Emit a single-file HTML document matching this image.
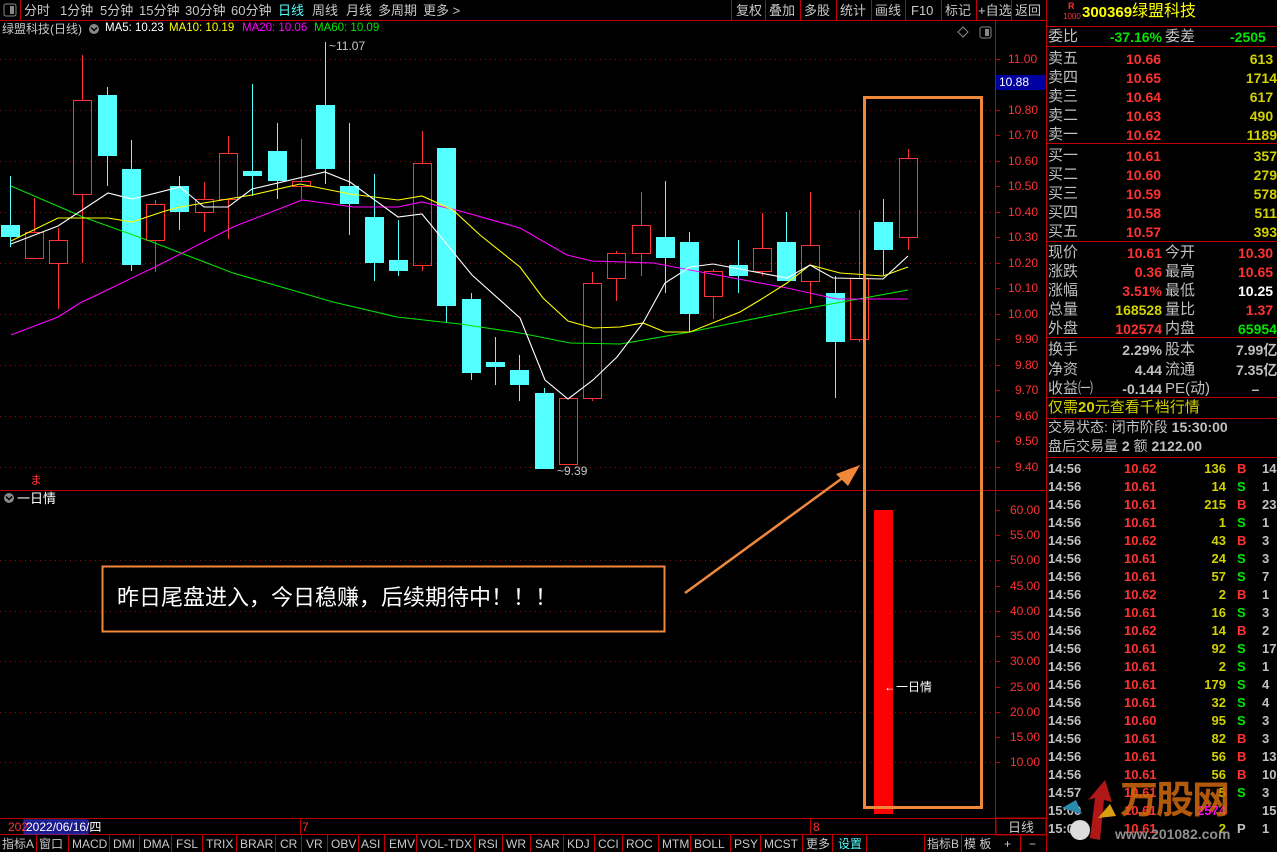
<!DOCTYPE html>
<html><head><meta charset="utf-8"><style>
*{margin:0;padding:0;box-sizing:border-box}
body{width:1277px;height:852px;background:#000;overflow:hidden;position:relative;font-family:"Liberation Sans","WenQuanYi Zen Hei","Noto Sans CJK SC",sans-serif;color:#c8c8c8}
.a{position:absolute;white-space:nowrap;line-height:1}
.t{font-size:13px}
.r{color:#ff3232}.y{color:#ffff00}.g{color:#00e600}.c{color:#54ffff}.w{color:#fff}.o{color:#d2d200}.m{color:#ff00ff}.gr{color:#c0c0c0}
.rp{font-size:14px;font-weight:bold}
</style></head><body>
<svg width="1277" height="852" style="position:absolute;left:0;top:0">
<line x1="0" y1="20.5" x2="1046" y2="20.5" stroke="#c00000"/>
<line x1="20.5" y1="0" x2="20.5" y2="20" stroke="#c00000"/>
<g stroke="#c00000"><line x1="731.5" y1="0" x2="731.5" y2="20"/><line x1="765.5" y1="0" x2="765.5" y2="20"/><line x1="800.5" y1="0" x2="800.5" y2="20"/><line x1="836.5" y1="0" x2="836.5" y2="20"/><line x1="871.5" y1="0" x2="871.5" y2="20"/><line x1="905.5" y1="0" x2="905.5" y2="20"/><line x1="941.5" y1="0" x2="941.5" y2="20"/><line x1="976.5" y1="0" x2="976.5" y2="20"/><line x1="1011.5" y1="0" x2="1011.5" y2="20"/></g>
<rect x="4" y="4" width="12" height="12" fill="none" stroke="#888" rx="2"/><rect x="10" y="6" width="4" height="8" fill="#888"/>
<line x1="995.5" y1="20" x2="995.5" y2="835" stroke="#c00000"/>
<line x1="1046.5" y1="0" x2="1046.5" y2="852" stroke="#c00000"/>
<line x1="0" y1="490.5" x2="1046" y2="490.5" stroke="#c00000"/>
<line x1="0" y1="818.5" x2="1046" y2="818.5" stroke="#c00000"/>
<line x1="0" y1="834.5" x2="1046" y2="834.5" stroke="#c00000"/>
<g stroke="#8a1010" stroke-dasharray="1,4">
<line x1="0" y1="59.5" x2="995" y2="59.5"/><line x1="0" y1="110.5" x2="995" y2="110.5"/><line x1="0" y1="161.5" x2="995" y2="161.5"/><line x1="0" y1="212.5" x2="995" y2="212.5"/><line x1="0" y1="263.5" x2="995" y2="263.5"/><line x1="0" y1="314.5" x2="995" y2="314.5"/><line x1="0" y1="365.5" x2="995" y2="365.5"/><line x1="0" y1="416.5" x2="995" y2="416.5"/><line x1="0" y1="467.5" x2="995" y2="467.5"/>
<line x1="0" y1="560.5" x2="995" y2="560.5"/><line x1="0" y1="611.5" x2="995" y2="611.5"/><line x1="0" y1="661.5" x2="995" y2="661.5"/><line x1="0" y1="712.5" x2="995" y2="712.5"/><line x1="0" y1="762.5" x2="995" y2="762.5"/>
</g>
<g stroke="#c00000">
<line x1="996" y1="59.5" x2="1000" y2="59.5"/><line x1="996" y1="84.5" x2="1000" y2="84.5"/><line x1="996" y1="110.5" x2="1000" y2="110.5"/><line x1="996" y1="135.5" x2="1000" y2="135.5"/><line x1="996" y1="161.5" x2="1000" y2="161.5"/><line x1="996" y1="186.5" x2="1000" y2="186.5"/><line x1="996" y1="212.5" x2="1000" y2="212.5"/><line x1="996" y1="237.5" x2="1000" y2="237.5"/><line x1="996" y1="263.5" x2="1000" y2="263.5"/><line x1="996" y1="288.5" x2="1000" y2="288.5"/><line x1="996" y1="314.5" x2="1000" y2="314.5"/><line x1="996" y1="339.5" x2="1000" y2="339.5"/><line x1="996" y1="365.5" x2="1000" y2="365.5"/><line x1="996" y1="390.5" x2="1000" y2="390.5"/><line x1="996" y1="416.5" x2="1000" y2="416.5"/><line x1="996" y1="441.5" x2="1000" y2="441.5"/><line x1="996" y1="467.5" x2="1000" y2="467.5"/>
</g>
<g stroke="#54ffff" stroke-width="1">
<line x1="10.5" y1="176" x2="10.5" y2="247"/><line x1="107.5" y1="87" x2="107.5" y2="186"/><line x1="131.5" y1="140" x2="131.5" y2="271"/><line x1="179.5" y1="176" x2="179.5" y2="230"/><line x1="252.5" y1="84" x2="252.5" y2="196"/><line x1="277.5" y1="123" x2="277.5" y2="199"/><line x1="325.5" y1="42" x2="325.5" y2="184"/><line x1="349.5" y1="123" x2="349.5" y2="235"/><line x1="374.5" y1="174" x2="374.5" y2="281"/><line x1="398.5" y1="220" x2="398.5" y2="276"/><line x1="446.5" y1="148" x2="446.5" y2="323"/><line x1="471.5" y1="293" x2="471.5" y2="380"/><line x1="495.5" y1="337" x2="495.5" y2="385"/><line x1="519.5" y1="355" x2="519.5" y2="401"/><line x1="544.5" y1="388" x2="544.5" y2="469"/><line x1="665.5" y1="181" x2="665.5" y2="293"/><line x1="689.5" y1="232" x2="689.5" y2="332"/><line x1="738.5" y1="240" x2="738.5" y2="293"/><line x1="786.5" y1="212" x2="786.5" y2="281"/><line x1="835.5" y1="276" x2="835.5" y2="398"/><line x1="883.5" y1="199" x2="883.5" y2="275"/>
</g>
<g fill="#54ffff">
<rect x="1" y="225" width="19" height="12"/><rect x="98" y="95" width="19" height="61"/><rect x="122" y="169" width="19" height="96"/><rect x="170" y="186" width="19" height="26"/><rect x="243" y="171" width="19" height="5"/><rect x="268" y="151" width="19" height="30"/><rect x="316" y="105" width="19" height="64"/><rect x="340" y="186" width="19" height="18"/><rect x="365" y="217" width="19" height="46"/><rect x="389" y="260" width="19" height="11"/><rect x="437" y="148" width="19" height="158"/><rect x="462" y="299" width="19" height="74"/><rect x="486" y="362" width="19" height="5"/><rect x="510" y="370" width="19" height="15"/><rect x="535" y="393" width="19" height="76"/><rect x="656" y="237" width="19" height="21"/><rect x="680" y="242" width="19" height="72"/><rect x="729" y="265" width="19" height="11"/><rect x="777" y="242" width="19" height="39"/><rect x="826" y="293" width="19" height="49"/><rect x="874" y="222" width="19" height="28"/>
</g>
<g stroke="#ff3232" fill="none">
<path d="M34.5 198V232M58.5 228V240M58.5 263V309M82.5 55V100M82.5 194V263M155.5 200V204M155.5 240V272M204.5 182V199M204.5 212V232M228.5 136V153M228.5 199V239M301.5 139V181M301.5 186V199M422.5 131V163M422.5 265V271M592.5 272V283M592.5 398V401M616.5 251V253M616.5 278V301M641.5 192V225M641.5 253V276M713.5 269V271M713.5 296V319M762.5 213V248M762.5 271V276M810.5 192V245M810.5 281V304M859.5 210V278M859.5 339V342M908.5 149V158M908.5 237V250"/>
<rect x="25.5" y="232.5" width="18" height="26"/><rect x="49.5" y="240.5" width="18" height="23"/><rect x="73.5" y="100.5" width="18" height="94"/><rect x="146.5" y="204.5" width="18" height="36"/><rect x="195.5" y="199.5" width="18" height="13"/><rect x="219.5" y="153.5" width="18" height="46"/><rect x="292.5" y="181.5" width="18" height="5"/><rect x="413.5" y="163.5" width="18" height="102"/><rect x="559.5" y="398.5" width="18" height="66"/><rect x="583.5" y="283.5" width="18" height="115"/><rect x="607.5" y="253.5" width="18" height="25"/><rect x="632.5" y="225.5" width="18" height="28"/><rect x="704.5" y="271.5" width="18" height="25"/><rect x="753.5" y="248.5" width="18" height="23"/><rect x="801.5" y="245.5" width="18" height="36"/><rect x="850.5" y="278.5" width="18" height="61"/><rect x="899.5" y="158.5" width="18" height="79"/>
</g>
<g fill="none" stroke-width="1.1">
<polyline stroke="#00e600" points="11,186 83,217 147,240 233,273 333,302 397,317 460,324 520,333 570,343 620,344 690,332 787,312 853,300 908,290"/>
<polyline stroke="#ff00ff" points="11,335 58,317 80,303 155,267 233,227 302,200 353,207 398,207 422,202 460,211 520,228 567,255 592,261 653,263 690,270 787,288 837,299 908,299"/>
<polyline stroke="#ffff00" points="11,241 58,218 108,218 132,222 165,211 180,207 252,195 300,184 350,194 398,200 422,196 453,210 480,235 520,267 543,298 568,321 593,328 620,327 643,323 665,332 690,332 740,312 760,300 787,283 810,265 840,273 883,276 908,267"/>
<polyline stroke="#ffffff" points="11,244 58,226 108,193 132,199 180,187 204,207 228,207 252,189 325,172 350,182 398,217 422,214 472,275 520,318 545,380 568,399 593,380 617,357 643,323 665,283 690,267 713,264 787,278 810,265 833,278 883,279 908,256"/>
</g>
<rect x="996" y="75" width="50" height="15" fill="#0000a0"/>
<rect x="874" y="510" width="19" height="304" fill="#ff0000"/>
<g stroke="#c00000"><line x1="996" y1="510.5" x2="1000" y2="510.5"/><line x1="996" y1="535.5" x2="1000" y2="535.5"/><line x1="996" y1="560.5" x2="1000" y2="560.5"/><line x1="996" y1="586.5" x2="1000" y2="586.5"/><line x1="996" y1="611.5" x2="1000" y2="611.5"/><line x1="996" y1="636.5" x2="1000" y2="636.5"/><line x1="996" y1="661.5" x2="1000" y2="661.5"/><line x1="996" y1="687.5" x2="1000" y2="687.5"/><line x1="996" y1="712.5" x2="1000" y2="712.5"/><line x1="996" y1="737.5" x2="1000" y2="737.5"/><line x1="996" y1="762.5" x2="1000" y2="762.5"/></g>
<rect x="864.5" y="97.5" width="117" height="710" fill="none" stroke="#f0883c" stroke-width="3"/>
<rect x="102.5" y="566.5" width="562" height="65" fill="none" stroke="#f0883c" stroke-width="2"/>
<line x1="685" y1="593" x2="848" y2="474" stroke="#f0883c" stroke-width="2.5"/>
<polygon points="860,465 836,474 848,486" fill="#f0883c"/>
<rect x="24" y="820" width="64" height="14" fill="#1a1a8c" stroke="#3030c0"/>
<line x1="300.5" y1="818" x2="300.5" y2="834" stroke="#c00000"/>
<line x1="810.5" y1="818" x2="810.5" y2="834" stroke="#c00000"/>
<rect x="996" y="818" width="50" height="17" fill="none" stroke="#c00000"/>
<g stroke="#c00000">
<line x1="36.5" y1="835" x2="36.5" y2="852"/><line x1="68.5" y1="835" x2="68.5" y2="852"/><line x1="109.5" y1="835" x2="109.5" y2="852"/><line x1="139.5" y1="835" x2="139.5" y2="852"/><line x1="171.5" y1="835" x2="171.5" y2="852"/><line x1="202.5" y1="835" x2="202.5" y2="852"/><line x1="236.5" y1="835" x2="236.5" y2="852"/><line x1="275.5" y1="835" x2="275.5" y2="852"/><line x1="301.5" y1="835" x2="301.5" y2="852"/><line x1="327.5" y1="835" x2="327.5" y2="852"/><line x1="358.5" y1="835" x2="358.5" y2="852"/><line x1="384.5" y1="835" x2="384.5" y2="852"/><line x1="416.5" y1="835" x2="416.5" y2="852"/><line x1="474.5" y1="835" x2="474.5" y2="852"/><line x1="502.5" y1="835" x2="502.5" y2="852"/><line x1="530.5" y1="835" x2="530.5" y2="852"/><line x1="563.5" y1="835" x2="563.5" y2="852"/><line x1="594.5" y1="835" x2="594.5" y2="852"/><line x1="622.5" y1="835" x2="622.5" y2="852"/><line x1="658.5" y1="835" x2="658.5" y2="852"/><line x1="690.5" y1="835" x2="690.5" y2="852"/><line x1="730.5" y1="835" x2="730.5" y2="852"/><line x1="760.5" y1="835" x2="760.5" y2="852"/><line x1="802.5" y1="835" x2="802.5" y2="852"/><line x1="832.5" y1="835" x2="832.5" y2="852"/><line x1="866.5" y1="835" x2="866.5" y2="852"/><line x1="924.5" y1="835" x2="924.5" y2="852"/><line x1="961.5" y1="835" x2="961.5" y2="852"/><line x1="1020.5" y1="835" x2="1020.5" y2="852"/>
</g>
<g stroke="#c00000">
<line x1="1046" y1="26.5" x2="1277" y2="26.5"/><line x1="1046" y1="46.5" x2="1277" y2="46.5"/><line x1="1046" y1="143.5" x2="1277" y2="143.5"/><line x1="1046" y1="241.5" x2="1277" y2="241.5"/><line x1="1046" y1="337.5" x2="1277" y2="337.5"/><line x1="1046" y1="397.5" x2="1277" y2="397.5"/><line x1="1046" y1="418.5" x2="1277" y2="418.5"/><line x1="1046" y1="457.5" x2="1277" y2="457.5"/>
</g>
<path d="M963 27l5 5-5 5-5-5z" fill="none" stroke="#888"/>
<rect x="980" y="27" width="11" height="11" fill="none" stroke="#888" rx="2"/><rect x="985" y="29" width="4" height="7" fill="#888"/>
<circle cx="9" cy="498" r="5" fill="#888"/><path d="M6 496.5l3 3 3-3" stroke="#000" fill="none" stroke-width="1.5"/>
<circle cx="94" cy="29" r="5" fill="#888"/><path d="M91 27.5l3 3 3-3" stroke="#000" fill="none" stroke-width="1.5"/>
</svg>

<div class="a t" style="left:24px;top:4px">分时</div>
<div class="a t" style="left:60px;top:4px">1分钟</div>
<div class="a t" style="left:100px;top:4px">5分钟</div>
<div class="a t" style="left:139px;top:4px">15分钟</div>
<div class="a t" style="left:185px;top:4px">30分钟</div>
<div class="a t" style="left:231px;top:4px">60分钟</div>
<div class="a t c" style="left:278px;top:4px">日线</div>
<div class="a t" style="left:312px;top:4px">周线</div>
<div class="a t" style="left:346px;top:4px">月线</div>
<div class="a t" style="left:378px;top:4px">多周期</div>
<div class="a t" style="left:423px;top:4px">更多 &gt;</div>
<div class="a t" style="left:736px;top:4px">复权</div>
<div class="a t" style="left:769px;top:4px">叠加</div>
<div class="a t" style="left:804px;top:4px">多股</div>
<div class="a t" style="left:840px;top:4px">统计</div>
<div class="a t" style="left:875px;top:4px">画线</div>
<div class="a t" style="left:911px;top:4px">F10</div>
<div class="a t" style="left:945px;top:4px">标记</div>
<div class="a t" style="left:978px;top:4px">+自选</div>
<div class="a t" style="left:1015px;top:4px">返回</div>

<div class="a" style="left:2px;top:23px;font-size:12px">绿盟科技(日线)</div>
<div class="a w" style="left:105px;top:23px;font-size:11.5px">MA5: 10.23</div>
<div class="a y" style="left:169px;top:23px;font-size:11.5px">MA10: 10.19</div>
<div class="a m" style="left:242px;top:23px;font-size:11.5px">MA20: 10.06</div>
<div class="a g" style="left:314px;top:23px;font-size:11.5px">MA60: 10.09</div>
<div class="a" style="left:329px;top:40px;font-size:12px">~11.07</div>
<div class="a" style="left:557px;top:465px;font-size:12px">~9.39</div>

<div class="a r" style="font-size:12px;left:1008px;top:53px">11.00</div>
<div class="a r" style="font-size:12px;left:1008px;top:104px">10.80</div>
<div class="a r" style="font-size:12px;left:1008px;top:129px">10.70</div>
<div class="a r" style="font-size:12px;left:1008px;top:155px">10.60</div>
<div class="a r" style="font-size:12px;left:1008px;top:180px">10.50</div>
<div class="a r" style="font-size:12px;left:1008px;top:206px">10.40</div>
<div class="a r" style="font-size:12px;left:1008px;top:231px">10.30</div>
<div class="a r" style="font-size:12px;left:1008px;top:257px">10.20</div>
<div class="a r" style="font-size:12px;left:1008px;top:282px">10.10</div>
<div class="a r" style="font-size:12px;left:1008px;top:308px">10.00</div>
<div class="a r" style="font-size:12px;left:1015px;top:333px">9.90</div>
<div class="a r" style="font-size:12px;left:1015px;top:359px">9.80</div>
<div class="a r" style="font-size:12px;left:1015px;top:384px">9.70</div>
<div class="a r" style="font-size:12px;left:1015px;top:410px">9.60</div>
<div class="a r" style="font-size:12px;left:1015px;top:435px">9.50</div>
<div class="a r" style="font-size:12px;left:1015px;top:461px">9.40</div>
<div class="a w" style="font-size:12px;left:999px;top:76px">10.88</div>

<div class="a r" style="font-size:12px;left:1010px;top:504px">60.00</div>
<div class="a r" style="font-size:12px;left:1010px;top:529px">55.00</div>
<div class="a r" style="font-size:12px;left:1010px;top:554px">50.00</div>
<div class="a r" style="font-size:12px;left:1010px;top:580px">45.00</div>
<div class="a r" style="font-size:12px;left:1010px;top:605px">40.00</div>
<div class="a r" style="font-size:12px;left:1010px;top:630px">35.00</div>
<div class="a r" style="font-size:12px;left:1010px;top:655px">30.00</div>
<div class="a r" style="font-size:12px;left:1010px;top:681px">25.00</div>
<div class="a r" style="font-size:12px;left:1010px;top:706px">20.00</div>
<div class="a r" style="font-size:12px;left:1010px;top:731px">15.00</div>
<div class="a r" style="font-size:12px;left:1010px;top:756px">10.00</div>

<div class="a r" style="font-size:12px;left:30px;top:474px">ま</div>
<div class="a t w" style="left:17px;top:492px">一日情</div>
<div class="a t w" style="left:884px;top:681px;font-size:12px">←一日情</div>
<div class="a w" style="left:117px;top:587px;font-size:22px">昨日尾盘进入，今日稳赚，后续期待中！！！</div>

<div class="a r" style="left:8px;top:821px;font-size:12px">202</div>
<div class="a w" style="left:26px;top:821px;font-size:12px">2022/06/16/四</div>
<div class="a r" style="left:302px;top:821px;font-size:12px">7</div>
<div class="a r" style="left:813px;top:821px;font-size:12px">8</div>
<div class="a t" style="left:1008px;top:821px">日线</div>

<div class="a" style="top:838px;font-size:12px;left:0">
<span class="a" style="left:2px">指标A</span><span class="a" style="left:39px">窗口</span><span class="a" style="left:72px">MACD</span><span class="a" style="left:113px">DMI</span><span class="a" style="left:143px">DMA</span><span class="a" style="left:176px">FSL</span><span class="a" style="left:206px">TRIX</span><span class="a" style="left:240px">BRAR</span><span class="a" style="left:280px">CR</span><span class="a" style="left:306px">VR</span><span class="a" style="left:331px">OBV</span><span class="a" style="left:361px">ASI</span><span class="a" style="left:389px">EMV</span><span class="a" style="left:420px">VOL-TDX</span><span class="a" style="left:478px">RSI</span><span class="a" style="left:506px">WR</span><span class="a" style="left:535px">SAR</span><span class="a" style="left:567px">KDJ</span><span class="a" style="left:598px">CCI</span><span class="a" style="left:626px">ROC</span><span class="a" style="left:662px">MTM</span><span class="a" style="left:694px">BOLL</span><span class="a" style="left:734px">PSY</span><span class="a" style="left:764px">MCST</span><span class="a" style="left:806px">更多</span><span class="a c" style="left:838px">设置</span><span class="a" style="left:927px">指标B</span><span class="a" style="left:964px">模 板</span><span class="a" style="left:1004px">+</span><span class="a" style="left:1029px">−</span>
</div>

<div class="a r" style="left:1068px;top:2px;font-size:9px;font-weight:bold">R</div>
<div class="a r" style="left:1063px;top:13px;font-size:8px">1000</div>
<div class="a y" style="left:1082px;top:5px;font-size:15px;font-weight:bold">300369</div>
<div class="a y" style="left:1132px;top:4px;font-size:16px">绿盟科技</div>

<div class="a gr" style="left:1048px;top:29px;font-size:15px">委比</div>
<div class="a rp g" style="left:1095px;top:30px;width:67px;text-align:right">-37.16%</div>
<div class="a gr" style="left:1165px;top:29px;font-size:15px">委差</div>
<div class="a rp g" style="left:1230px;top:30px">-2505</div>

<div class="a gr" style="left:1048px;top:49px;font-size:15px;line-height:19px">卖五<br>卖四<br>卖三<br>卖二<br>卖一</div>
<div class="a rp r" style="left:1126px;top:50px;line-height:19px">10.66<br>10.65<br>10.64<br>10.63<br>10.62</div>
<div class="a rp o" style="left:1200px;top:50px;line-height:19px;width:77px;text-align:right">613&nbsp;<br>1714<br>617&nbsp;<br>490&nbsp;<br>1189</div>

<div class="a gr" style="left:1048px;top:146px;font-size:15px;line-height:19px">买一<br>买二<br>买三<br>买四<br>买五</div>
<div class="a rp r" style="left:1126px;top:147px;line-height:19px">10.61<br>10.60<br>10.59<br>10.58<br>10.57</div>
<div class="a rp o" style="left:1200px;top:147px;line-height:19px;width:77px;text-align:right">357<br>279<br>578<br>511<br>393</div>

<div class="a gr" style="left:1048px;top:243px;font-size:15px;line-height:19px">现价<br>涨跌<br>涨幅<br>总量<br>外盘</div>
<div class="a rp" style="left:1090px;top:244px;line-height:19px;width:72px;text-align:right"><span class="r">10.61</span><br><span class="r">0.36</span><br><span class="r">3.51%</span><br><span class="o">168528</span><br><span class="r">102574</span></div>
<div class="a gr" style="left:1165px;top:243px;font-size:15px;line-height:19px">今开<br>最高<br>最低<br>量比<br>内盘</div>
<div class="a rp" style="left:1238px;top:244px;line-height:19px"><span class="r">10.30</span><br><span class="r">10.65</span><br><span class="w">10.25</span><br><span class="r">&nbsp;&nbsp;1.37</span><br><span class="g">65954</span></div>

<div class="a gr" style="left:1048px;top:340px;font-size:15px;line-height:19.5px">换手<br>净资<br>收益㈠</div>
<div class="a rp gr" style="left:1090px;top:341px;line-height:19.5px;width:72px;text-align:right">2.29%<br>4.44<br>-0.144</div>
<div class="a gr" style="left:1165px;top:340px;font-size:15px;line-height:19.5px">股本<br>流通<br>PE(动)</div>
<div class="a rp gr" style="left:1236px;top:341px;line-height:19.5px">7.99亿<br>7.35亿<br>&nbsp;&nbsp;&nbsp;&nbsp;–</div>

<div class="a o" style="left:1048px;top:400px;font-size:15px">仅需<b>20</b>元查看千档行情</div>
<div class="a gr" style="left:1048px;top:420px;font-size:14px">交易状态: 闭市阶段 <b>15:30:00</b></div>
<div class="a gr" style="left:1048px;top:439px;font-size:14px">盘后交易量 <b>2</b> 额 <b>2122.00</b></div>

<div class="a rp" style="left:1048px;top:460px;line-height:18px;font-size:13px">
<div style="position:relative;width:240px">
<div class="gr">14:56<br>14:56<br>14:56<br>14:56<br>14:56<br>14:56<br>14:56<br>14:56<br>14:56<br>14:56<br>14:56<br>14:56<br>14:56<br>14:56<br>14:56<br>14:56<br>14:56<br>14:56<br>14:57<br>15:00<br>15:00</div>
<div class="r" style="position:absolute;left:76px;top:0">10.62<br>10.61<br>10.61<br>10.61<br>10.62<br>10.61<br>10.61<br>10.62<br>10.61<br>10.62<br>10.61<br>10.61<br>10.61<br>10.61<br>10.60<br>10.61<br>10.61<br>10.61<br>10.61<br>10.61<br>10.61</div>
<div class="o" style="position:absolute;left:130px;top:0;width:48px;text-align:right">136<br>14<br>215<br>1<br>43<br>24<br>57<br>2<br>16<br>14<br>92<br>2<br>179<br>32<br>95<br>82<br>56<br>56<br>5<br><span class="m">2574</span><br>2</div>
<div style="position:absolute;left:189px;top:0"><span class="r">B</span><br><span class="g">S</span><br><span class="r">B</span><br><span class="g">S</span><br><span class="r">B</span><br><span class="g">S</span><br><span class="g">S</span><br><span class="r">B</span><br><span class="g">S</span><br><span class="r">B</span><br><span class="g">S</span><br><span class="g">S</span><br><span class="g">S</span><br><span class="g">S</span><br><span class="g">S</span><br><span class="r">B</span><br><span class="r">B</span><br><span class="r">B</span><br><span class="g">S</span><br>&nbsp;<br><span class="gr">P</span></div>
<div class="gr" style="position:absolute;left:214px;top:0">14<br>1<br>23<br>1<br>3<br>3<br>7<br>1<br>3<br>2<br>17<br>1<br>4<br>4<br>3<br>3<br>13<br>10<br>3<br>150<br>1</div>
</div></div>

<div class="a" style="left:1120px;top:782px;font-size:38px;font-weight:bold;color:#d2690f;opacity:.85;letter-spacing:-2px">万股网</div>
<div class="a" style="left:1115px;top:827px;font-size:14px;font-weight:bold;color:#909090">www.201082.com</div>
<svg width="60" height="70" style="position:absolute;left:1060px;top:778px"><path d="M30 60 L35 20 L28 22 L45 2 L52 24 L44 22 L40 62Z" fill="#b01818"/><circle cx="20" cy="52" r="10" fill="#ddd"/><path d="M2 30 L16 22 L22 36Z" fill="#2a8ab0"/><path d="M38 40 L50 26 L56 38Z" fill="#d8a010"/></svg>
</body></html>
